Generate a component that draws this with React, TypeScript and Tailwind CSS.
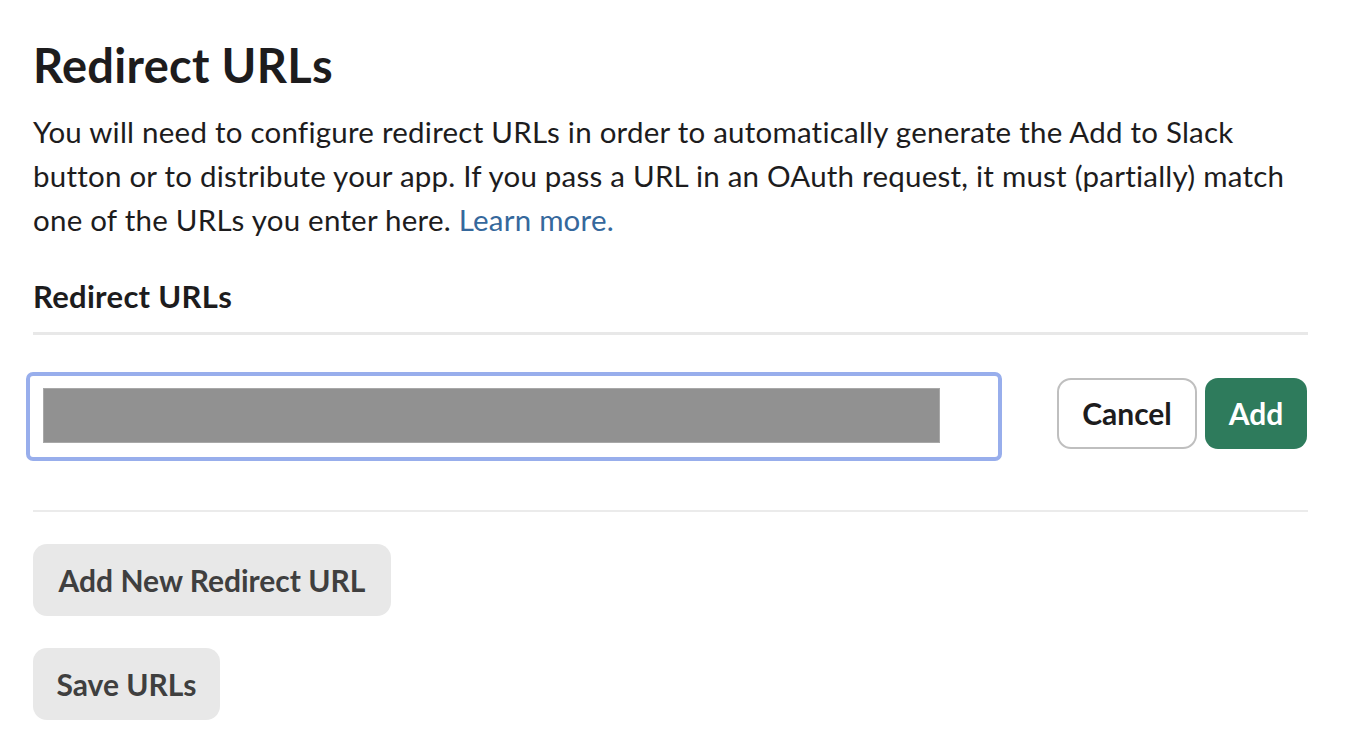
export default function App() {
  return (
    <div className="min-h-screen bg-white font-['Lato','Noto_Sans',sans-serif] text-[#1d1c1d]">
      <div className="ml-[33px] w-[1275px] pt-[37px]">
        <h1 className="text-[47px] font-bold leading-[56px] tracking-[0.3px]">Redirect URLs</h1>
        <p className="mt-[17px] text-[29.5px] leading-[44px] tracking-[0.23px]">
          You will need to configure redirect URLs in order to automatically generate the Add to Slack
          <br />
          button or to distribute your app. If you pass a URL in an OAuth request, it must (partially) match
          <br />
          one of the URLs you enter here. <a className="text-[#35689c]">Learn more.</a>
        </p>
        <h2 className="mt-[36px] text-[31px] font-bold leading-[36px] tracking-[0.3px]">Redirect URLs</h2>
        <div className="mt-[18px] h-[3px] bg-[#e8e8e8]" />

        <div className="mt-[37px] flex items-start">
          <div className="-ml-[7px] h-[89px] w-[976px] rounded-[7px] border-[4px] border-[#98aeec] bg-white pl-[13px] pt-[12px]">
            <div className="h-[55px] w-[897px] border border-[#a8a8a8] bg-[#919191]" />
          </div>
          <div className="ml-[55px] mt-[6px] flex gap-[8px]">
            <button className="h-[71px] w-[140px] rounded-[14px] border-2 border-[#bfbfbf] bg-white text-[30px] font-bold text-[#1d1c1d]">
              Cancel
            </button>
            <button className="h-[71px] w-[102px] rounded-[13px] bg-[#2e7b5c] text-[30px] font-bold text-white">
              Add
            </button>
          </div>
        </div>

        <div className="mt-[49px] h-[2px] bg-[#ebebeb]" />

        <div className="mt-[32px] flex flex-col items-start gap-[32px]">
          <button className="h-[72px] w-[358px] rounded-[14px] bg-[#e8e8e8] text-[30px] font-bold text-[#3f3f3f]">
            Add New Redirect URL
          </button>
          <button className="h-[72px] w-[187px] rounded-[14px] bg-[#e8e8e8] text-[30px] font-bold text-[#3f3f3f]">
            Save URLs
          </button>
        </div>
      </div>
    </div>
  )
}
